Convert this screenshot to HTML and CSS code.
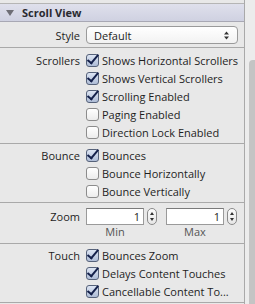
FILE: index.html
```html
<!DOCTYPE html>
<html lang="en">
<head>
  <meta charset="UTF-8" />
  <title>Scroll View Inspector</title>
  <link rel="stylesheet" href="styles.css">
</head>
<body>
  <div class="window">
    <div class="inspector">
      <div class="top-gap"></div>

      <!-- Cabecera -->
      <div class="header">
        <span class="disclosure"></span>
        <span class="title">Scroll View</span>
      </div>

      <!-- Style -->
      <div class="section style-section">
        <div class="row popup-row">
          <span class="label">Style</span>
          <div class="popup">
            <span>Default</span>
            <svg class="popup-arrows" width="7" height="9" viewBox="0 0 7 9">
              <path d="M3.5 0.5 L6 3.5 L1 3.5 Z M3.5 8.5 L6 5.5 L1 5.5 Z" fill="#333"/>
            </svg>
          </div>
        </div>
      </div>

      <!-- Scrollers -->
      <div class="section scrollers">
        <div class="row">
          <span class="label">Scrollers</span>
          <span class="check on"></span><span class="text">Shows Horizontal Scrollers</span>
        </div>
        <div class="row">
          <span class="label"></span>
          <span class="check on"></span><span class="text">Shows Vertical Scrollers</span>
        </div>
        <div class="row">
          <span class="label"></span>
          <span class="check on"></span><span class="text">Scrolling Enabled</span>
        </div>
        <div class="row">
          <span class="label"></span>
          <span class="check"></span><span class="text">Paging Enabled</span>
        </div>
        <div class="row">
          <span class="label"></span>
          <span class="check"></span><span class="text">Direction Lock Enabled</span>
        </div>
      </div>

      <!-- Bounce -->
      <div class="section">
        <div class="row">
          <span class="label">Bounce</span>
          <span class="check on"></span><span class="text">Bounces</span>
        </div>
        <div class="row">
          <span class="label"></span>
          <span class="check"></span><span class="text">Bounce Horizontally</span>
        </div>
        <div class="row">
          <span class="label"></span>
          <span class="check"></span><span class="text">Bounce Vertically</span>
        </div>
      </div>

      <!-- Zoom -->
      <div class="section zoom-section">
        <div class="row zoom-row">
          <span class="label">Zoom</span>
          <div class="field-group">
            <div class="field-line">
              <div class="field">1</div>
              <div class="stepper"><i class="up"></i><i class="down"></i></div>
            </div>
            <span class="caption">Min</span>
          </div>
          <div class="field-group">
            <div class="field-line">
              <div class="field">1</div>
              <div class="stepper"><i class="up"></i><i class="down"></i></div>
            </div>
            <span class="caption">Max</span>
          </div>
        </div>
      </div>

      <!-- Touch -->
      <div class="section">
        <div class="row">
          <span class="label">Touch</span>
          <span class="check on"></span><span class="text">Bounces Zoom</span>
        </div>
        <div class="row">
          <span class="label"></span>
          <span class="check on"></span><span class="text">Delays Content Touches</span>
        </div>
        <div class="row">
          <span class="label"></span>
          <span class="check on"></span><span class="text">Cancellable Content To...</span>
        </div>
      </div>
    </div>

    <div class="track"><div class="thumb"></div></div>
  </div>
</body>
</html>
```

FILE: styles.css
```css
body {
  margin: 0;
  background: #e8e8e8;
  font-family: 'Open Sans', 'Liberation Sans', sans-serif;
  font-size: 11px;
  color: #1e1e1e;
}

.window {
  display: flex;
  height: 304px;
  overflow: hidden;
}

.inspector {
  width: 244px;
  border-right: 1px solid #a9a9a9;
  background: #e8e8e8;
}

.top-gap {
  height: 3px;
  border-bottom: 1px solid #b5b5b5;
}

.header {
  height: 17px;
  display: flex;
  align-items: center;
  background: linear-gradient(#dfe0ec, #cfd1e1);
  border-bottom: 1px solid #a8a8b4;
}
.disclosure {
  width: 0;
  height: 0;
  margin: 0 8px 0 6px;
  border-left: 4px solid transparent;
  border-right: 4px solid transparent;
  border-top: 6px solid #6e6e76;
}
.title {
  font-weight: bold;
  color: #2a2a30;
}

.section {
  padding: 2px 0 2px;
  border-bottom: 1px solid #a9a9a9;
}
.style-section {
  padding: 2px 0 1px;
}
.scrollers {
  padding-top: 3px;
}

.row {
  display: flex;
  align-items: center;
  height: 18px;
}
.label {
  width: 80px;
  text-align: right;
  margin-right: 6px;
  flex-shrink: 0;
  white-space: nowrap;
}
.text {
  margin-left: 3px;
  white-space: nowrap;
}

/* Casillas */
.check {
  width: 11px;
  height: 11px;
  border: 1px solid #8c8c8c;
  border-radius: 3px;
  background: linear-gradient(#ffffff, #ececec);
  position: relative;
  flex-shrink: 0;
}
.check.on {
  border-color: #56627a;
  background: linear-gradient(#dde5f3, #aebcd6);
}
.check.on::after {
  content: "";
  position: absolute;
  left: 3px;
  top: -3px;
  width: 4px;
  height: 10px;
  border-right: 2.5px solid #14204a;
  border-bottom: 2.5px solid #14204a;
  transform: rotate(40deg);
}

/* Popup */
.popup-row {
  height: 22px;
}
.popup {
  width: 136px;
  height: 16px;
  border: 1px solid #9a9a9a;
  border-radius: 4px;
  background: linear-gradient(#ffffff, #f2f2f2);
  display: flex;
  align-items: center;
  justify-content: space-between;
  padding: 0 7px;
}

/* Zoom */
.zoom-section {
  padding: 5px 0 4px;
}
.zoom-row {
  height: 31px;
  align-items: flex-start;
}
.zoom-row .label {
  line-height: 17px;
}
.field-group {
  display: flex;
  flex-direction: column;
  margin-right: 9px;
}
.field-line {
  display: flex;
  align-items: center;
  gap: 3px;
}
.field {
  width: 58px;
  height: 17px;
  border: 1px solid #9a9a9a;
  border-top-color: #7a7a7a;
  background: #fff;
  text-align: right;
  padding-right: 3px;
  box-sizing: border-box;
  line-height: 15px;
}
.stepper {
  width: 10px;
  height: 17px;
  border: 1px solid #8a8a8a;
  border-radius: 5px;
  background: linear-gradient(#fdfdfd, #e6e6e6);
  display: flex;
  flex-direction: column;
  align-items: center;
  justify-content: space-around;
  padding: 1px 0;
  box-sizing: border-box;
}
.stepper i {
  width: 0;
  height: 0;
  border-left: 2px solid transparent;
  border-right: 2px solid transparent;
}
.stepper .up { border-bottom: 3px solid #333; }
.stepper .down { border-top: 3px solid #333; }
.caption {
  color: #555;
  width: 58px;
  text-align: center;
  line-height: 14px;
}

/* Barra de scroll */
.track {
  flex: 1;
  background: #ececec;
  padding-top: 60px;
}
.thumb {
  height: 260px;
  margin-left: 4px;
  background: #c4c4c4;
  border-radius: 4px 0 0 0;
}
```
